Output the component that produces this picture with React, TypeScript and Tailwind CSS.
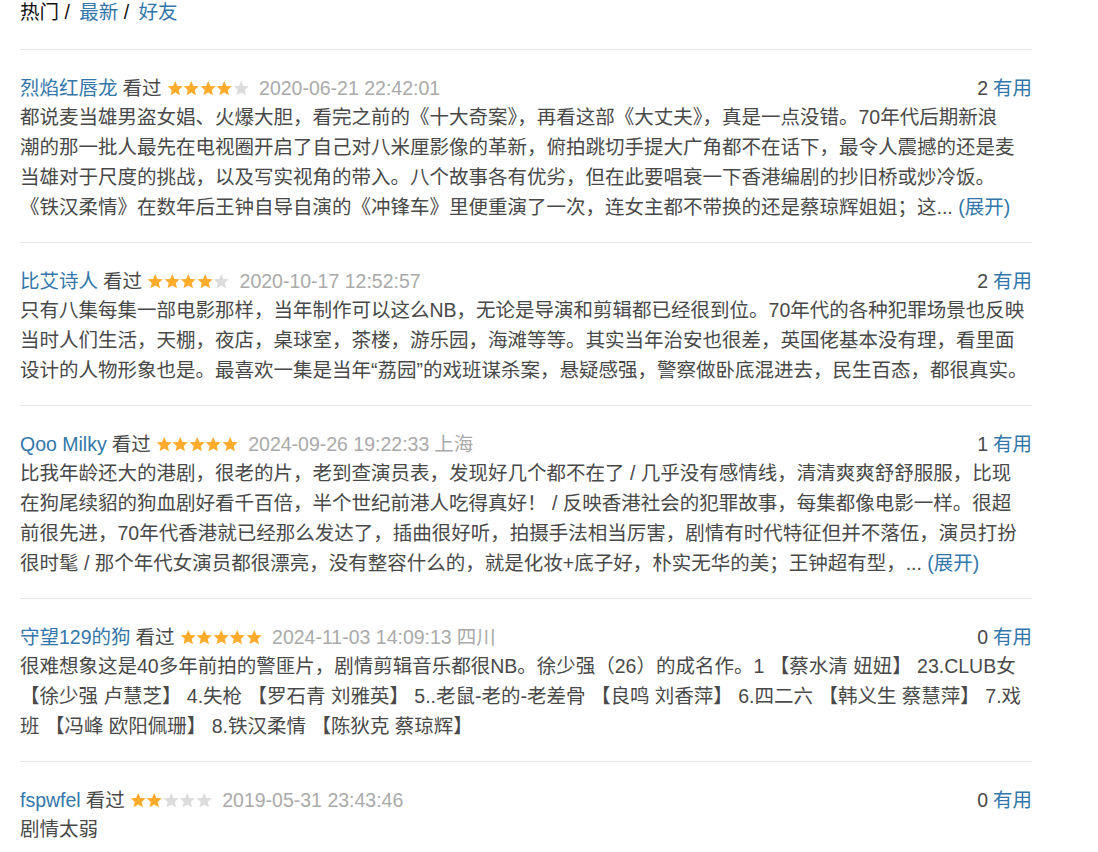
import React from "react";

type Review = {
  user: string;
  stars: number;
  time: string;
  place?: string;
  votes: number;
  lines: string[];
  more?: boolean;
};

const reviews: Review[] = [
  {
    user: "烈焰红唇龙",
    stars: 4,
    time: "2020-06-21 22:42:01",
    votes: 2,
    lines: [
      "都说麦当雄男盗女娼、火爆大胆，看完之前的《十大奇案》，再看这部《大丈夫》，真是一点没错。70年代后期新浪",
      "潮的那一批人最先在电视圈开启了自己对八米厘影像的革新，俯拍跳切手提大广角都不在话下，最令人震撼的还是麦",
      "当雄对于尺度的挑战，以及写实视角的带入。八个故事各有优劣，但在此要唱衰一下香港编剧的抄旧桥或炒冷饭。",
      "《铁汉柔情》在数年后王钟自导自演的《冲锋车》里便重演了一次，连女主都不带换的还是蔡琼辉姐姐；这...",
    ],
    more: true,
  },
  {
    user: "比艾诗人",
    stars: 4,
    time: "2020-10-17 12:52:57",
    votes: 2,
    lines: [
      "只有八集每集一部电影那样，当年制作可以这么NB，无论是导演和剪辑都已经很到位。70年代的各种犯罪场景也反映",
      "当时人们生活，天棚，夜店，桌球室，茶楼，游乐园，海滩等等。其实当年治安也很差，英国佬基本没有理，看里面",
      "设计的人物形象也是。最喜欢一集是当年“荔园”的戏班谋杀案，悬疑感强，警察做卧底混进去，民生百态，都很真实。",
    ],
  },
  {
    user: "Qoo Milky",
    stars: 5,
    time: "2024-09-26 19:22:33",
    place: "上海",
    votes: 1,
    lines: [
      "比我年龄还大的港剧，很老的片，老到查演员表，发现好几个都不在了 / 几乎没有感情线，清清爽爽舒舒服服，比现",
      "在狗尾续貂的狗血剧好看千百倍，半个世纪前港人吃得真好！ / 反映香港社会的犯罪故事，每集都像电影一样。很超",
      "前很先进，70年代香港就已经那么发达了，插曲很好听，拍摄手法相当厉害，剧情有时代特征但并不落伍，演员打扮",
      "很时髦 / 那个年代女演员都很漂亮，没有整容什么的，就是化妆+底子好，朴实无华的美；王钟超有型，...",
    ],
    more: true,
  },
  {
    user: "守望129的狗",
    stars: 5,
    time: "2024-11-03 14:09:13",
    place: "四川",
    votes: 0,
    lines: [
      "很难想象这是40多年前拍的警匪片，剧情剪辑音乐都很NB。徐少强（26）的成名作。1 【蔡水清 妞妞】 23.CLUB女",
      "【徐少强 卢慧芝】 4.失枪 【罗石青 刘雅英】 5..老鼠-老的-老差骨 【良鸣 刘香萍】 6.四二六 【韩义生 蔡慧萍】 7.戏",
      "班 【冯峰 欧阳佩珊】 8.铁汉柔情 【陈狄克 蔡琼辉】",
    ],
  },
  {
    user: "fspwfel",
    stars: 2,
    time: "2019-05-31 23:43:46",
    votes: 0,
    lines: ["剧情太弱"],
  },
];

function Star({ on }: { on: boolean }) {
  return (
    <svg width="16.5" height="17" viewBox="0 0 24 24" className="shrink-0">
      <path
        d="M12 1l3.2 7.2 7.8.7-5.9 5.2 1.8 7.8L12 17.8 5.1 21.9l1.8-7.8L1 8.9l7.8-.7z"
        fill={on ? "#ffac2d" : "#dcdcdc"}
      />
    </svg>
  );
}

function ReviewItem({ r }: { r: Review }) {
  return (
    <div className="border-t border-[#e6e6e6] pt-[24px] pb-[20px]">
      <div className="flex items-center justify-between leading-[28px]">
        <div className="flex items-center whitespace-nowrap">
          <span className="text-[#3377aa]">{r.user}</span>
          <span className="ml-[5px] text-[#494949]">看过</span>
          <span className="ml-[5px] flex">
            {[0, 1, 2, 3, 4].map((i) => (
              <Star key={i} on={i < r.stars} />
            ))}
          </span>
          <span className="ml-[10px] text-[#aaaaaa]">
            {r.time}
            {r.place && <span className="ml-[5px]">{r.place}</span>}
          </span>
        </div>
        <div className="whitespace-nowrap">
          <span className="text-[#494949]">{r.votes}</span>
          <span className="ml-[5px] text-[#3377aa]">有用</span>
        </div>
      </div>
      <p className="leading-[30px] text-[#494949]">
        {r.lines.map((l, i) => (
          <React.Fragment key={i}>
            {l}
            {i === r.lines.length - 1 && r.more && (
              <span className="text-[#3377aa]"> (展开)</span>
            )}
            {i < r.lines.length - 1 && <br />}
          </React.Fragment>
        ))}
      </p>
    </div>
  );
}

export default function App() {
  return (
    <div
      className="min-h-screen bg-white pl-[20px] text-[19.5px]"
      style={{ fontFamily: '"Liberation Sans", Arial, "Noto Sans CJK SC", sans-serif' }}
    >
      <div className="w-[1012px]">
        <div className="h-[49px] leading-[24px]">
          <span className="text-[#111111]">热门</span>
          <span className="text-[#111111]"> / </span>
          <span className="ml-[4px] text-[#3377aa]">最新</span>
          <span className="text-[#111111]"> / </span>
          <span className="ml-[4px] text-[#3377aa]">好友</span>
        </div>
        {reviews.map((r, i) => (
          <ReviewItem key={i} r={r} />
        ))}
      </div>
    </div>
  );
}
